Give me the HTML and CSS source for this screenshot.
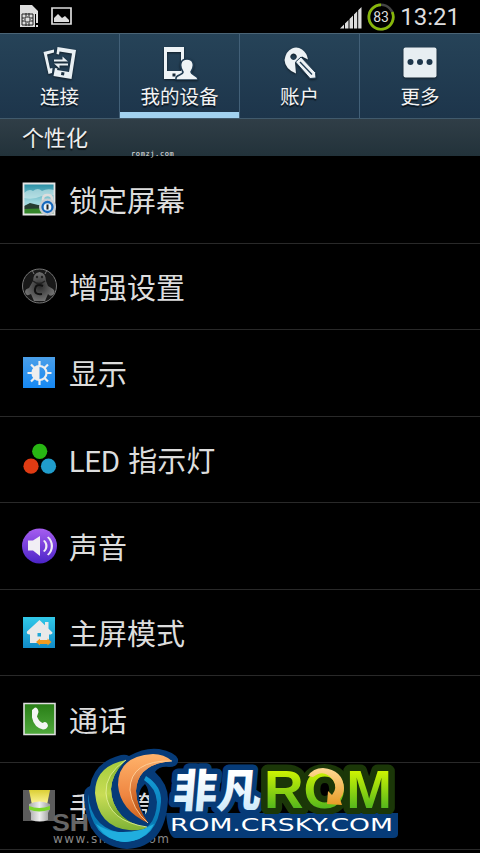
FILE: index.html
```html
<!DOCTYPE html>
<html lang="zh-CN">
<head>
<meta charset="utf-8">
<title>设置</title>
<link rel="stylesheet" href="styles.css">
</head>
<body>
<main class="screen">
  <header class="status">
    <svg class="status-left" width="54" height="24" viewBox="0 0 54 24">
      <path d="M1 1h12l6 6v3H16v13H1z" fill="#ddd"/><path d="M3 10h11v11H3z" fill="#ddd" stroke="#222"/><path d="M6 13h5v5H6zM7 9v3M10 9v3M7 19v3M10 19v3M3 14h2M3 17h2M12 14h2M12 17h2" fill="none" stroke="#222"/><path d="M17 10h2v9h-2zm0 11h2v2h-2z" fill="#ddd"/>
      <path d="M33 4h19v16H33z" fill="none" stroke="#ddd" stroke-width="1.7"/><path d="M35 18v-4l4-4 4 4 3-2 4 4v2z" fill="#ddd"/>
    </svg>
    <div class="status-right">
      <svg width="58" height="32" viewBox="0 0 58 32"><path d="M1 28.500L5 24.500v4zM6 28.500v-5l3.500-3.500v8.500zM10.500 28.500v-9.500l3.500-3.500v13zM15 28.500v-14l3.200-3.200v17.200zM19.200 28.500v-18.200l3.300-3.300v21.500z" fill="#ddd"/><circle cx="42" cy="17" r="12.200" fill="none" stroke="#444" stroke-width="2.500"/><path d="M42 4.800A12.200 12.200 0 1 0 53.200 12" fill="none" stroke="#87b70a" stroke-width="2.700"/><text class="battery" x="42" y="22" text-anchor="middle">83</text></svg>
      <span class="clock">13:21</span>
    </div>
  </header>
  <nav class="tabs">
    <div class="tab"><svg width="36" height="34" viewBox="0 0 36 34"><path d="M1.500 6L12 3.500v3L5 8.500l3 14 2.500-.5-.5 5-3.500 1z" fill="#e9f0f4"/><path fill-rule="evenodd" d="M15.500 1L34 4l-4.500 29-18-3 1.500-8 2.500.5-.5 1.500 12 2L30 7.500 17.500 5.500l-.5 3-2.500-.5zM19.500 26l-.5 3 3 .5.500-3z" fill="#e9f0f4"/><path d="M12 15.500h14l-5.500-5v3H12zM26 17.500H12l5.500 5v-3H26z" fill="#e9f0f4"/></svg><span>连接</span></div>
    <div class="tab tab-on"><svg width="36" height="34" viewBox="0 0 36 34"><path fill-rule="evenodd" d="M2 1h20v32H2zM5 6v19h14V6zM10.500 27.500v3h3v-3z" fill="#eef3f6"/><path d="M14 34v-2c0-3 7-3 7-6-4-6-3-13 4-13s8 7 4 13c0 3 7 3 7 7v1z" fill="#eef3f6" stroke="#203c53" stroke-width="1.600"/></svg><span>我的设备</span></div>
    <div class="tab"><svg width="36" height="34" viewBox="0 0 36 34"><path fill-rule="evenodd" d="M10 2.500Q15 0 20 3.500q5 3.500 6 10l-6-3-7 6 1 11Q3 23 2.500 14 4 5 10 2.500zM11.500 7.500a3.200 3.200 0 1 0 .1 0z" fill="#edf2f5"/><path d="M13.500 16l5.500-5 14.500 15.500.5 5.500-6 .5z" fill="#edf2f5" stroke="#203c53" stroke-width="1"/><path d="M18 16l12 12.500" stroke="#203c53" stroke-width="1.300"/></svg><span>账户</span></div>
    <div class="tab"><svg width="36" height="34" viewBox="0 0 36 34"><rect x="1.500" y="1.500" width="33" height="30" rx="2" fill="#e7eef2"/><g fill="#1e374c"><circle cx="8.500" cy="16" r="3"/><circle cx="18" cy="16" r="3"/><circle cx="27.500" cy="16" r="3"/></g></svg><span>更多</span></div>
  </nav>
  <h1 class="section"><span>个性化</span><small>romzj.com</small></h1>
  <section class="list">
    <div class="row"><svg class="icon" viewBox="0 0 36 36"><defs><linearGradient id="sky" x2="0" y2="1"><stop stop-color="#248ca2"/><stop offset=".6" stop-color="#a0d8df"/></linearGradient></defs><path d="M2.500 2.500h31v31h-31z" fill="url(#sky)"/><path d="M3 12q5-5 9-2 5-4 9 0 5-3 12-1v5q-7 2-12 1-9 4-18 2z" fill="#d3edef" opacity=".6"/><path d="M3 25l6-3 8 2 16 1v5H3z" fill="#263c31"/><path d="M3 28l30-1v6H3z" fill="#35862b"/><path d="M2.500 2.500h31v31h-31z" fill="none" stroke="#e5e5e5" stroke-width="1.800"/><path d="M22 21v-3q0-4 4.500-4t4.500 4v3" fill="none" stroke="#ddd" stroke-width="2.500"/><circle cx="26.500" cy="26" r="8.500" fill="#c9ced2"/><circle cx="26.500" cy="26" r="5" fill="#e8f2fa" stroke="#1769bd" stroke-width="2.300"/><path d="M26.500 23.500v5" stroke="#222" stroke-width="2"/></svg><span>锁定屏幕</span></div>
    <div class="row"><svg class="icon" viewBox="0 0 36 36"><defs><radialGradient id="figure"><stop stop-color="#2c2c2c"/><stop offset="1" stop-color="#707070"/></radialGradient></defs><circle cx="18.500" cy="18" r="17" fill="#181818" stroke="#777"/><path d="M12 13q0-8 6.500-9 6.500 1 6.500 9l2 5 5 3q3 3 0 6-3 2-5-1l-3 7H13l-3-7q-5 3-6-2 0-3 4-4z" fill="url(#figure)"/><path d="M13 6l-2-4M24 6l2-4" stroke="#777"/><circle cx="16" cy="9" r="1.200" fill="#222"/><circle cx="21" cy="9" r="1.200" fill="#222"/><path d="M22 18q-7-3-8 3t7 5" fill="none" stroke="#111" stroke-width="2"/><path d="M12 13q6 5 12 0" fill="none" stroke="#222" stroke-width="1.500"/></svg><span>增强设置</span></div>
    <div class="row"><svg class="icon" viewBox="0 0 36 36"><defs><linearGradient id="blue" x2="0" y2="1"><stop stop-color="#4a9fe9"/><stop offset="1" stop-color="#1688f3"/></linearGradient></defs><path d="M2 2h32v31H2z" fill="url(#blue)"/><g stroke="#eee" stroke-width="2.200" fill="none"><path d="M18.500 6v5M18.500 25v5M6.500 18h5M25.500 18h5M10 9.500l3.500 3.500M23.500 23l3.500 3.500M10 26.500l3.500-3.500M23.500 13l3.500-3.500"/><circle cx="18.500" cy="18" r="7"/></g><path d="M18.500 11a7 7 0 0 0 0 14z" fill="#eee"/></svg><span>显示</span></div>
    <div class="row"><svg class="icon" viewBox="0 0 36 36"><circle cx="18.700" cy="10.300" r="7.600" fill="#28b613"/><circle cx="10" cy="25.200" r="7.600" fill="#df3b13"/><circle cx="27.500" cy="25.200" r="7.600" fill="#209dcc"/></svg><span>LED 指示灯</span></div>
    <div class="row"><svg class="icon" viewBox="0 0 36 36"><defs><linearGradient id="purple" x2="0" y2="1"><stop stop-color="#a65df0"/><stop offset="1" stop-color="#4b24c7"/></linearGradient></defs><circle cx="18.500" cy="18" r="17.500" fill="url(#purple)"/><path d="M7 12.500h5L19 8v20l-7-5.500H7zM22 13c3 2 3 8 0 10l1.500 1c4-3 4-9 0-12zM26 9.500c5 4 5 13 0 17l1.500 1c6-5 6-14 0-19z" fill="#f1eef5"/></svg><span>声音</span></div>
    <div class="row"><svg class="icon" viewBox="0 0 36 36"><defs><linearGradient id="cyan" x2="0" y2="1"><stop stop-color="#31c9e9"/><stop offset="1" stop-color="#118bc8"/></linearGradient></defs><path d="M2 2h32v31H2z" fill="url(#cyan)"/><path fill-rule="evenodd" d="M18.500 5L31.500 17.500q0 2-3.500 2V28H9v-8.500q-4 0-3-3zM16.500 18v3.500H20V18z" fill="#e9e9e9"/><path d="M24 7h3.500v7L24 11z" fill="#e9e9e9"/><path d="M15 27l4-3.500v1.500h7.500v-1.500l4 3.500-4 3.500V29H19v1.500z" fill="#f19a20"/></svg><span>主屏模式</span></div>
    <div class="row"><svg class="icon" viewBox="0 0 36 36"><defs><linearGradient id="green" x2="0" y2="1"><stop stop-color="#287d16"/><stop offset="1" stop-color="#51aa3d"/></linearGradient></defs><path d="M3 2.500h31v31H3z" fill="url(#green)" stroke="#dedede" stroke-width="1.600"/><path d="M11 9l3-2.500q3 0 3.500 4.500l-1.500 4.500q2 5 5.500 6.500l2-1q3 0 3.500 4-1.500 3.500-5 3.500-9-2-11-12z" fill="#f5f5f5"/></svg><span>通话</span></div>
    <div class="row"><svg class="icon" viewBox="0 0 36 36"><defs><linearGradient id="beam" x2="0" y2="1"><stop stop-color="#dccf35"/><stop offset="1" stop-color="#fff8a0"/></linearGradient><linearGradient id="metal"><stop stop-color="#aaa"/><stop offset=".5" stop-color="#eee"/><stop offset="1" stop-color="#999"/></linearGradient></defs><path d="M2 2h32v31H2z" fill="#5c5c5c"/><path d="M8 2h21l-3 15H11z" fill="url(#beam)"/><path d="M8 16q10.500-5 21 0v5l-2 4v7q-8 3-17 0v-7l-2-4z" fill="url(#metal)"/><path d="M8 18q10 4 21 0v3.500q-11 4-21 0z" fill="#7bd62a"/></svg><span>手电筒</span></div>
  </section>
  <svg class="watermark" width="364" height="108" viewBox="52 745 364 108">
    <defs><linearGradient id="limeMoon" x2="0" y2="1"><stop stop-color="#a5cc3c"/><stop offset=".5" stop-color="#c8dc55"/><stop offset="1" stop-color="#7fb336"/></linearGradient><linearGradient id="limeInner" x2="0" y2="1"><stop stop-color="#79ad2a"/><stop offset=".5" stop-color="#bcd64a"/><stop offset="1" stop-color="#4f8f1c"/></linearGradient><linearGradient id="orangeMoon" x2="0" y2="1"><stop stop-color="#ffb36b"/><stop offset=".6" stop-color="#ef8641"/><stop offset="1" stop-color="#c9601c"/></linearGradient><linearGradient id="orangeInner" x2="0" y2="1"><stop stop-color="#f8ad6c"/><stop offset=".5" stop-color="#d8702f"/><stop offset="1" stop-color="#a84408"/></linearGradient><linearGradient id="ring" x2="0" y2="1"><stop stop-color="#149bd5"/><stop offset=".7" stop-color="#0879b4"/><stop offset="1" stop-color="#18b7e8"/></linearGradient><linearGradient id="ice" x2="0" y2="1"><stop offset=".3" stop-color="#fff"/><stop offset="1" stop-color="#c2e5fa"/></linearGradient><linearGradient id="lime" gradientUnits="userSpaceOnUse" x1="0" y1="767" x2="0" y2="809"><stop stop-color="#dafa00"/><stop offset="1" stop-color="#52b51d"/></linearGradient><linearGradient id="gold" x2="0" y2="1"><stop stop-color="#ffda94"/><stop offset="1" stop-color="#e79b26"/></linearGradient></defs>
    <text x="52" y="831" class="stamp" textLength="98" lengthAdjust="spacingAndGlyphs">SHUAJI</text><text x="53" y="843" class="url" textLength="116">www.shuaji.com</text>
    <path fill-rule="evenodd" d="M84 796q0-8 6-10 4-24 31-31 5-1 8 1 16-9 30-7 16 3 19 10 1 8-9 8-10-1-14 5 13 12 13 27-2 48-41 50-41-3-43-53zM145 784q-6 5-6 13 0 10 6 18 4-5 4-17 0-9-4-14z" fill="#063b78"/>
    <path d="M146 776q16 10 15 26-3 38-36 40-35-3-37-44v-4q3 37 40 40 28-2 29-32-1-14-13-22z" fill="url(#ring)"/>
    <path d="M96 824q10 7 23 8 20 1 35-8-8 16-29 18-18-1-29-18z" fill="#20aede"/>
    <path d="M126 760Q95 766 95 793q3 34 34 37 13 1 18-3-16-2-25-11-11-12-11-27 1-16 15-29z" fill="url(#limeMoon)"/><path d="M126 760q-21 14-20 33 2 28 41 34-16-2-25-11-11-12-11-27 1-16 15-29z" fill="url(#limeInner)"/><path d="M126 760q-21 14-20 33 2 28 41 34" fill="none" stroke="#e9f4a0" stroke-width=".8"/>
    <path d="M172 761q-8-7-19-7-35 2-35 31 2 25 30 38-12-17-12-32 1-27 36-30z" fill="url(#orangeMoon)"/><path d="M172 761q-42-1-42 29 2 19 18 33-12-17-12-32 1-27 36-30z" fill="url(#orangeInner)"/><path d="M172 761q-42-1-42 29 2 19 18 33" fill="none" stroke="#ffd19b" stroke-width=".9"/>
    <path d="M166 813h232v21q0 4-5 4H175q-7-1-9-25z" fill="#063b78"/>
    <g transform="translate(172 807) skewX(-5)"><text class="brand" textLength="88" lengthAdjust="spacingAndGlyphs">非凡</text></g>
    <text x="264" y="808" class="rom" textLength="128" lengthAdjust="spacingAndGlyphs">ROM</text>
    <path d="M308 776q5-8 15-8 20 2 21 20 0 6-4 11l2 6-15-1 1-13 4 4q6-7 1-15-9-12-20-3z" fill="url(#gold)"/>
    <path d="M175 814h221v19H175z" fill="#063b78"/>
    <text x="170" y="831" class="domain" textLength="223" lengthAdjust="spacingAndGlyphs">ROM.CRSKY.COM</text>
  </svg>
</main>
</body>
</html>
```
FILE: styles.css
```css
* { box-sizing: border-box; }
body { margin: 0; background: #000; }
.screen { width: 480px; height: 853px; overflow: hidden; position: relative; color: #ddd; font-family: Roboto, "Noto Sans CJK SC", sans-serif; background: #000; }
.status { height: 33px; display: flex; justify-content: space-between; padding: 0 20px 0 19px; }
.status-left { margin-top: 4px; }
.status-right { display: flex; gap: 3px; }
.clock { font: 24px/34px Roboto, sans-serif; }
.battery { font: 14px Roboto, sans-serif; fill: #ddd; }
.tabs { height: 86px; display: grid; grid-template-columns: repeat(4, 1fr); background: linear-gradient(#264358, #1d354b); border-top: 1px solid #4a6476; border-bottom: 1px solid #415a6c; }
.tab { display: flex; flex-direction: column; align-items: center; border-right: 1px solid #426078; padding-top: 12px; }
.tab:last-child { border: 0; }
.tab svg { filter: drop-shadow(0 1px 1px #0008); }
.tab span { font-size: 19.5px; line-height: 28px; margin-top: 4px; color: #f3f3f3; text-shadow: 0 2px 1px #0009; }
.tab-on { box-shadow: inset 0 -6px #a2d2f0; }
.section { height: 37px; margin: 0; padding-left: 22px; background: linear-gradient(#303e47, #22323a); font-size: 22px; line-height: 40px; font-weight: 400; color: #eee; text-shadow: 0 2px 1px #0009; display: flex; }
.section small { font: 7px/11px "DejaVu Sans Mono", monospace; letter-spacing: .6px; margin: 30px 0 0 43px; text-shadow: none; white-space: nowrap; }
.list { display: grid; grid-template-rows: 87.5px repeat(7, 86.6px); }
.row { display: flex; align-items: center; gap: 12px; padding-left: 21px; border-bottom: 1px solid #292929; font-size: 29px; }
.row .icon { width: 36px; height: 36px; }
.row span { line-height: 44px; padding-top: 5px; word-spacing: 1px; }
.watermark { position: absolute; left: 52px; top: 745px; }
.stamp { font: bold 23px "Liberation Sans", sans-serif; fill: #666; }
.url { font: 12px "DejaVu Sans", sans-serif; fill: #888; }
.brand, .rom { paint-order: stroke; stroke-linejoin: round; }
.brand { font: 900 45px "Noto Sans CJK SC", sans-serif; fill: url(#ice); stroke: #063b78; stroke-width: 11px; }
.rom { font: bold 54px "Liberation Sans", sans-serif; fill: url(#lime); stroke: #1b3708; stroke-width: 13px; }
.domain { font: 18.5px "DejaVu Sans", sans-serif; fill: #fff; }
```
